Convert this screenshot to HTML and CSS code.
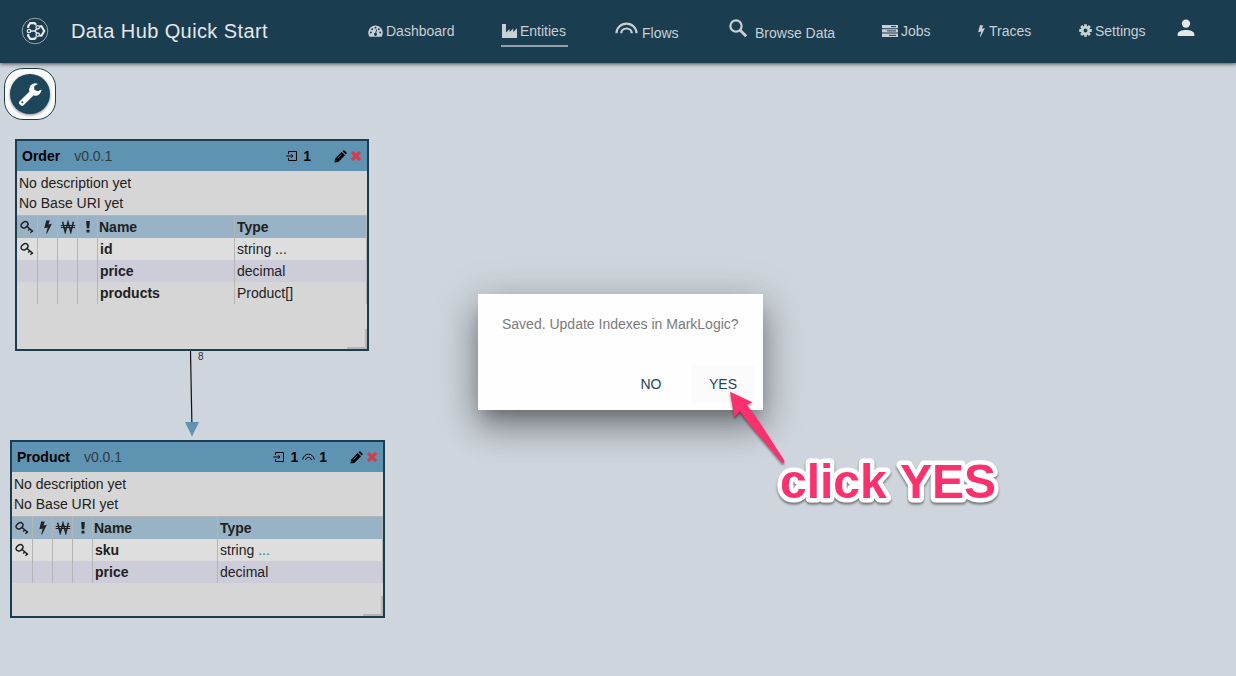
FILE: index.html
```html
<!DOCTYPE html>
<html lang="en">
<head>
<meta charset="utf-8">
<title>Data Hub Quick Start</title>
<link rel="stylesheet" href="styles.css">
</head>
<body>
<svg class="defs" width="0" height="0">
  <symbol id="key" viewBox="0 0 14 14"><g fill="none" stroke="currentColor"><ellipse cx="4.500" cy="4.800" rx="3.700" ry="2.700" transform="rotate(-35 4.500 4.800)" stroke-width="1.500"/><path d="M6.800 6.300 13 11.600M9.600 8.700 8.300 10.700M12 10.800l-1.500 2" stroke-width="1.400"/></g></symbol>
  <symbol id="bolt" viewBox="0 0 10 14"><path fill="currentColor" d="M3.200.5h3.600L5.400 4.500 8.800 3.700 4 13.400h-.8L4.700 7.500 1.300 8.300z"/></symbol>
  <symbol id="won" viewBox="0 0 16 14"><path fill="none" stroke="currentColor" stroke-width="1.500" d="M2.600 1.800 5.200 12 8 2.300 10.800 12l2.600-10.200"/><path stroke="currentColor" stroke-width="1" d="M.8 5.500h14.400M.8 7.500h14.400"/></symbol>
  <symbol id="bang" viewBox="0 0 6 14"><path fill="currentColor" d="M1.200 1h3.600L4.300 8.300H1.700zM1.500 9.800h3v2.700h-3z"/></symbol>
  <symbol id="input" viewBox="0 0 12 12"><path fill="none" stroke="currentColor" stroke-width="1" d="M2.500 4V1.500h8v9h-8V8M.3 6h6.500M5.200 4.300 6.900 6 5.200 7.700"/></symbol>
  <symbol id="flow" viewBox="0 0 24 12"><path fill="none" stroke="currentColor" stroke-width="2.300" d="M1.500 11.500a10.500 10 0 0 1 21 0M6.500 11.500a5.500 5 0 0 1 11 0"/></symbol>
  <symbol id="pencil" viewBox="0 0 13 13"><path fill="currentColor" d="M.5 12.500 1 8.700 7.700 2l3.300 3.300L4.300 12zM8.500 1.300l.8-.8q.6-.5 1.200 0l2 2q.5.600 0 1.200l-.8.800z"/><path stroke="#5e94b2" stroke-width=".7" d="M3.700 8.500 7.700 4.500M1.700 10.300l1 1"/></symbol>
  <symbol id="cross" viewBox="0 0 10 10"><path stroke="currentColor" stroke-width="3.200" d="m1 1 8 8M9 1 1 9"/></symbol>
</svg>

<header class="topbar">
  <svg class="logo" viewBox="0 0 28 28" fill="none" stroke="#e4e8ea">
    <circle cx="14" cy="14" r="12.800" stroke-width=".8" opacity=".75"/>
    <g stroke-width="2.200"><path d="M7.200 11V9L9.300 6.200h4.200l1.700 1.700M18.500 9.300h2l2.700 4.700-2.700 4.700h-2M15.200 20.100l-1.700 1.800H9.300L7.200 19v-2"/><path d="m9.500 14 4.500 0 1.800-2.200M14 14l1.800 2.200" stroke-width="1.400"/></g>
    <g stroke-width="1.300"><circle cx="8" cy="14" r="1.700"/><circle cx="16.700" cy="10.300" r="1.700"/><circle cx="16.700" cy="17.700" r="1.700"/></g>
  </svg>
  <h1 class="title">Data Hub Quick Start</h1>
  <nav class="nav">
    <a class="item dashboard"><svg width="15" height="12" viewBox="0 0 15 12"><path fill="currentColor" d="M1.400 11.800A7.300 7.300 0 1 1 13.600 11.800z"/><g fill="#1a3d4f"><circle cx="2.900" cy="7.500" r="1"/><circle cx="4.200" cy="4.300" r="1"/><circle cx="7.500" cy="2.800" r="1"/><circle cx="10.800" cy="4.300" r="1"/><circle cx="12.200" cy="7.500" r="1"/><path d="m8.200 4.500.9.200-.8 3.300a1.500 1.500 0 1 1-1-.2z"/></g></svg><span>Dashboard</span></a>
    <a class="item entities"><svg width="15" height="14" viewBox="0 0 15 14"><path fill="currentColor" d="M0 0h4v8.500l3.600-3.600V8l3.600-3.600V8L15 4.300V14H0z"/></svg><span>Entities</span></a>
    <a class="item flows"><svg width="23" height="12"><use href="#flow"/></svg><span>Flows</span></a>
    <a class="item browse"><svg width="19" height="19" viewBox="0 0 19 19"><g fill="none" stroke="currentColor"><circle cx="7" cy="7" r="5.600" stroke-width="2.200"/><path d="m11.200 11.200 6 6" stroke-width="2.800"/></g></svg><span>Browse Data</span></a>
    <a class="item jobs"><svg width="16" height="12" viewBox="0 0 16 12"><path fill="currentColor" d="M0 0h16v3.300H0zM0 4.300h16v3.300H0zM0 8.600h16V12H0z"/><path stroke="#1a3d4f" d="M9 1.600h5M5 5.900h9M7 10.300h7"/></svg><span>Jobs</span></a>
    <a class="item traces"><svg width="9" height="14"><use href="#bolt"/></svg><span>Traces</span></a>
    <a class="item settings"><svg width="13" height="13" viewBox="-6.500 -6.500 13 13"><g stroke="currentColor" stroke-width="2.800"><path d="M0-6.300V6.300M-6.300 0H6.300M-4.400-4.400 4.400 4.400M-4.400 4.400 4.400-4.400"/></g><circle r="4.600" fill="currentColor"/><circle r="1.900" fill="#1a3d4f"/></svg><span>Settings</span></a>
    <a class="user"><svg width="18" height="18" viewBox="0 0 18 18"><circle cx="9" cy="4.600" r="4.200" fill="currentColor"/><path fill="currentColor" d="M.7 17v-1.800C.7 12.400 5 11 9 11s8.300 1.400 8.300 4.200V17z"/></svg></a>
  </nav>
</header>

<main class="canvas">
  <div class="tools"><button class="fab" aria-label="Tools"><svg width="26" height="26" viewBox="0 0 26 26"><path fill="#fff" d="M2.200 20.700 12.500 10.500l4 4L6.300 24.400q-1.300 1-2.500-.1L2.300 22.900q-.9-1.100-.1-2.200z"/><path fill="#fff" d="M24.500 8.500 20.800 10.200 17.300 8.700 17.200 5.300 20.800 2.900A6.200 6.200 0 1 0 24.500 8.500z"/><circle cx="5.300" cy="21.200" r="1" fill="#1d465a"/></svg></button></div>

  <svg class="link" width="30" height="92" viewBox="0 0 30 92"><path d="m10.500 0 1.500 78" stroke="#111" stroke-width="1.200"/><path d="M5 71h14l-7 14.500z" fill="#5e94b2"/></svg>
  <span class="cardinality">8</span>

  <section class="entity order">
    <div class="head"><b>Order</b><span class="version">v0.0.1</span><span class="stats"><svg width="12" height="12"><use href="#input"/></svg><b>1</b></span><svg class="edit" width="13" height="13"><use href="#pencil"/></svg><svg class="delete" width="10" height="10"><use href="#cross"/></svg></div>
    <div class="info"><p>No description yet</p><p>No Base URI yet</p></div>
    <div class="row labels"><span><svg width="14" height="14"><use href="#key"/></svg></span><span><svg width="10" height="14"><use href="#bolt"/></svg></span><span><svg width="16" height="14"><use href="#won"/></svg></span><span><svg width="6" height="14"><use href="#bang"/></svg></span><span class="name">Name</span><span class="type">Type</span></div>
    <div class="row light"><span><svg width="14" height="14"><use href="#key"/></svg></span><span></span><span></span><span></span><span class="name">id</span><span class="type">string ...</span></div>
    <div class="row lilac"><span></span><span></span><span></span><span></span><span class="name">price</span><span class="type">decimal</span></div>
    <div class="row"><span></span><span></span><span></span><span></span><span class="name">products</span><span class="type">Product[]</span></div>
    <i class="grip"></i>
  </section>

  <section class="entity product">
    <div class="head"><b>Product</b><span class="version">v0.0.1</span><span class="stats"><svg width="12" height="12"><use href="#input"/></svg><b>1</b><svg class="arc" width="13" height="8" viewBox="0 0 13 8"><path fill="none" stroke="currentColor" stroke-width="1" d="M.7 6.500C2-.6 11-.6 12.300 6.500M3.500 7c.8-3.500 5.200-3.500 6 0"/></svg><b>1</b></span><svg class="edit" width="13" height="13"><use href="#pencil"/></svg><svg class="delete" width="10" height="10"><use href="#cross"/></svg></div>
    <div class="info"><p>No description yet</p><p>No Base URI yet</p></div>
    <div class="row labels"><span><svg width="14" height="14"><use href="#key"/></svg></span><span><svg width="10" height="14"><use href="#bolt"/></svg></span><span><svg width="16" height="14"><use href="#won"/></svg></span><span><svg width="6" height="14"><use href="#bang"/></svg></span><span class="name">Name</span><span class="type">Type</span></div>
    <div class="row light"><span><svg width="14" height="14"><use href="#key"/></svg></span><span></span><span></span><span></span><span class="name">sku</span><span class="type">string <em>...</em></span></div>
    <div class="row lilac"><span></span><span></span><span></span><span></span><span class="name">price</span><span class="type">decimal</span></div>
    <i class="grip"></i>
  </section>
</main>

<div class="dialog" role="dialog">
  <p class="message">Saved. Update Indexes in MarkLogic?</p>
  <div class="actions"><button class="btn">NO</button><button class="btn yes">YES</button></div>
</div>

<svg class="callout" width="310" height="140" viewBox="0 0 310 140">
  <path class="arrow" d="M20 5.700 42.300 16.300 36.700 18.700Q42 25 51.700 39.500L74.300 74.500Q74.500 78 72 76.700L46.700 47 Q36 34 30 25.300L24.300 31.300z"/>
  <text class="shout" x="70" y="112">click</text><text class="shout" x="190" y="112">YES</text>
</svg>
</body>
</html>
```
FILE: styles.css
```css
* { box-sizing: border-box; }
body {
  margin: 0;
  width: 1236px;
  height: 676px;
  overflow: hidden;
  position: relative;
  background: #ced5dc;
  color: #212121;
  font: 14px/20px "Liberation Sans", Arial, sans-serif;
}
p, h1 { margin: 0; }
svg { display: block; flex: none; overflow: visible; }
.defs { position: absolute; }
button { border: 0; padding: 0; font: inherit; }

.topbar {
  display: flex;
  align-items: center;
  height: 63px;
  padding-left: 21px;
  background: #1a3d4f;
  box-shadow: 0 1px 4px rgba(0, 0, 0, .65);
}
.logo { width: 28px; height: 28px; margin-bottom: 2px; }
.title {
  width: 297px;
  margin: 0 0 2px 22px;
  font-size: 20px;
  font-weight: 400;
  letter-spacing: .4px;
  color: #e4e8ea;
  white-space: nowrap;
}
.nav { display: flex; align-items: center; height: 63px; padding-bottom: 2px; color: #c9d0d5; }
.item { display: flex; align-items: center; gap: 3px; white-space: nowrap; flex: none; }
.dashboard { width: 86px; margin-right: 47px; }
.entities { width: 67px; height: 33px; padding: 2px 0 0 1px; border-bottom: 2px solid #8fa2ac; margin-right: 47px; }
.flows { width: 114px; gap: 4px; padding-top: 4px; }
.flows svg { margin-bottom: 9px; }
.browse { width: 153px; gap: 7px; padding-top: 4px; }
.browse svg { margin-bottom: 8px; }
.jobs { width: 95px; }
.traces { width: 102px; }
.settings { width: 98px; }
.user { color: #e6e6e6; margin-bottom: 6px; }

.tools {
  display: flex;
  width: 52px;
  height: 52px;
  margin: 5px 0 0 4px;
  padding: 5px;
  border: 1px solid #1a3d4f;
  border-radius: 19px;
  background: #fff;
}
.fab {
  display: grid;
  place-items: center;
  width: 40px;
  height: 40px;
  border-radius: 50%;
  background: #1d465a;
  box-shadow: 0 1px 3px rgba(0, 0, 0, .5);
}
.link { position: absolute; left: 180px; top: 351px; }
.cardinality { position: absolute; left: 198px; top: 347px; font-size: 10px; color: #333; }

.entity { position: absolute; border: 2px solid #1a3d4f; background: #d6d6d6; }
.order { left: 15px; top: 139px; width: 354px; height: 212px; --cols: 21px 20px 20px 20px 137px 132px; }
.product { left: 10px; top: 440px; width: 375px; height: 178px; --cols: 21px 20px 20px 20px 125px 165px; }
.head { display: flex; align-items: center; height: 30px; padding: 0 6px 0 5px; background: #5e94b2; color: #000; }
.version { margin-left: 14px; color: #303b42; }
.stats { display: flex; align-items: center; gap: 5px; margin-left: auto; margin-right: 23px; }
.stats .arc { margin: 0 -1px 0 -1px; }
.edit { margin-right: 4px; }
.delete { color: #d93a44; }
.info { height: 45px; padding: 2px 2px 0; border-bottom: 1px solid #b5b5b5; }
.row { display: grid; grid-template-columns: var(--cols); height: 22px; line-height: 22px; }
.row > span { border-right: 1px solid #b5b5b5; display: flex; align-items: center; justify-content: center; }
.row > .name { justify-content: start; padding-left: 2px; font-weight: 700; }
.row > .type { justify-content: start; padding-left: 2px; white-space: pre; }
.type em { font-style: normal; color: #2b7a96; }
.labels { background: #97b3c5; }
.labels > .name { padding-left: 1px; }
.labels > .type { font-weight: 700; }
.light { background: #dedede; }
.lilac { background: #cdccd9; }
.grip { position: absolute; right: 0; bottom: 0; width: 20px; height: 20px; border: solid #b5b5b5; border-width: 0 2px 2px 0; }

.dialog {
  position: absolute;
  left: 478px;
  top: 294px;
  width: 285px;
  height: 116px;
  padding: 20px 8px 8px 24px;
  background: #fefefe;
  box-shadow: 0 11px 15px -7px rgba(0, 0, 0, .22), 0 18px 30px 0 rgba(0, 0, 0, .28), 0 9px 40px 4px rgba(0, 0, 0, .18);
}
.message { color: #7b7b7b; white-space: nowrap; }
.actions { display: flex; justify-content: flex-end; gap: 8px; margin-top: 32px; }
.btn { width: 64px; height: 36px; border-radius: 2px; background: transparent; color: #1d465a; }
.yes { background: #fbfbfb; }

.callout { position: absolute; left: 710px; top: 386px; }
.arrow { fill: #ff2f6e; filter: drop-shadow(0 2px 1px rgba(0, 0, 0, .45)); }
.shout {
  font: 700 48px "Liberation Sans", Arial, sans-serif;
  fill: #ff2f6e;
  stroke: #fff;
  stroke-width: 9px;
  stroke-linejoin: round;
  paint-order: stroke;
  filter: drop-shadow(0 2px 1px rgba(0, 0, 0, .45));
}
```
